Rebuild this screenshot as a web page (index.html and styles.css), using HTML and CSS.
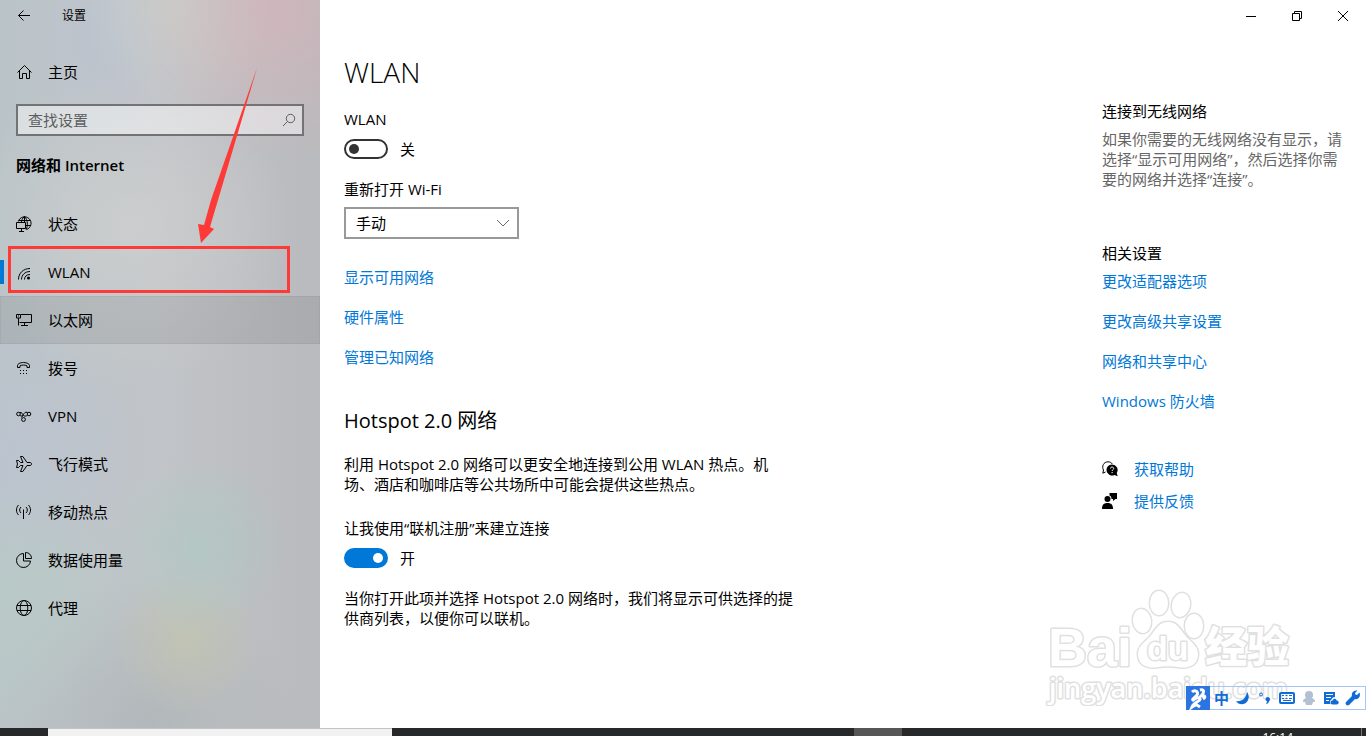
FILE: index.html
```html
<!DOCTYPE html>
<html lang="zh-CN">
  <head>
    <meta charset="UTF-8" />
    <meta name="viewport" content="width=device-width, initial-scale=1.0" />
    <title>设置</title>
    <link rel="stylesheet" href="styles.css">
  </head>
  <body>
    <div class="window">
      <aside class="sidebar">
        <header class="titlebar">
          <button class="back" aria-label="返回">
            <svg width="16" height="16" viewBox="0 0 16 16"><path d="M14 7.500H2.500M7.500 2.500l-5 5 5 5" /></svg>
          </button>
          <span>设置</span>
        </header>
        <a class="home" href="#">
          <svg width="16" height="16" viewBox="0 0 16 16"><path d="M1.500 8.500l7-7 7 7M3.500 7v7.500h3V9.500h4v5h3V7" /></svg>
          主页
        </a>
        <label class="search">
          <input type="search" placeholder="查找设置" aria-label="查找设置" />
          <svg width="14" height="14" viewBox="0 0 14 14"><circle cx="8.500" cy="5.500" r="4.200" /><path d="M5.500 8.500L1 13" /></svg>
        </label>
        <h2 class="category">网络和 Internet</h2>
        <nav class="nav">
          <a class="item" href="#">
            <svg width="16" height="16" viewBox="0 0 16 16"><path d="M2.300 5.500A6.500 6.500 0 1 1 10.500 13.500M3 4.500h11.500M9.500 9.500h5.200M8.500.500C6 2.500 5.500 4.500 5.500 6.500M8.500.500c3.500 3.500 3.500 9.500 1.500 13M8.500.500v6" /><path d="M.500 6.500h9v6h-9zM5.500 12.500v3M3 15.500h5" /></svg>
            状态
          </a>
          <a class="item active" href="#">
            <svg width="16" height="16" viewBox="0 0 16 16"><path d="M2.500 15.500C2.500 9 7.500 4.500 14 4.500M5.500 15.500c0-4.500 3.500-8 8.500-8M8.500 15.500c0-3 2.200-5 5.500-5" /><circle class="solid" cx="12.500" cy="14" r="1.500" /></svg>
            WLAN
          </a>
          <a class="item hover" href="#">
            <svg width="16" height="16" viewBox="0 0 16 16"><path d="M5 2.500h10.500v8H3.500M.500 2.500h4v3.500h-4zM2.500 6v7.500M8.500 10.500v3M5 13.500h7" /><path d="M2 4h1" /></svg>
            以太网
          </a>
          <a class="item" href="#">
            <svg width="16" height="16" viewBox="0 0 16 16"><path d="M1.500 7.500V5.500c0-1.500 2.500-3 6-3s6 1.500 6 3v2H11V5.800C9 4.800 6 4.800 4 5.800v1.700z" /><path d="M4 10.500h1M7 10.500h1M10 10.500h1M4 13.500h1M7 13.500h1M10 13.500h1" /></svg>
            拨号
          </a>
          <a class="item" href="#">
            <svg width="16" height="16" viewBox="0 0 16 16"><circle cx="2.500" cy="6" r="1.800" /><circle cx="13" cy="6" r="1.800" /><circle cx="7.500" cy="11.500" r="1.900" /><path d="M4 4.500c2-.5 2.300 1.500 3.300 2.700s2.500 1.300 4.200 0M11.500 4.500C9 3.500 8.500 5 7.500 6.500L5.500 9.500M4 7.500c1 .6 2 .6 2.800 0" /></svg>
            VPN
          </a>
          <a class="item" href="#">
            <svg width="16" height="16" viewBox="0 0 16 16"><path d="M.500 4.500h2l2 2H7L4.500.500h2.300L11 6.500h3c2 0 2 3 0 3h-3l-4.200 6H4.500L7 9.500H4.500l-2 2h-2l1-3.500z" /></svg>
            飞行模式
          </a>
          <a class="item" href="#">
            <svg width="16" height="16" viewBox="0 0 16 16"><path d="M7.500 5.500V15M5 3C3.200 4.500 3.200 7.500 5 9M10 3c1.800 1.500 1.800 4.500 0 6M2.500 1C-.2 4-.2 8 2.500 11M12.500 1c2.700 3 2.700 7 0 10" /></svg>
            移动热点
          </a>
          <a class="item" href="#">
            <svg width="16" height="16" viewBox="0 0 16 16"><path d="M7.500 1.500a7 7 0 1 0 7 7.500h-7zM9.500.500v6h6c0-3.500-2.500-6-6-6z" /></svg>
            数据使用量
          </a>
          <a class="item" href="#">
            <svg width="16" height="16" viewBox="0 0 16 16"><circle cx="8" cy="8" r="7.500" /><ellipse cx="8" cy="8" rx="3.800" ry="7.500" /><path d="M1 5.500h14M1 10.500h14" /></svg>
            代理
          </a>
        </nav>
        <div class="mark-box"></div>
        <svg class="mark-arrow" width="64" height="176" viewBox="0 0 64 176"><path d="M61 1L22 133 14 160l4 2L5 176 2 157l6 1 7-25z" /></svg>
      </aside>

      <div class="page">
        <header class="controls">
          <button aria-label="最小化"><svg width="10" height="10" viewBox="0 0 10 10"><path d="M0 5.500h10" /></svg></button>
          <button aria-label="还原"><svg width="10" height="10" viewBox="0 0 10 10"><path d="M.500 2.500h7v7h-7zM2.500 2.500v-2h7v7h-2" /></svg></button>
          <button aria-label="关闭"><svg width="10" height="10" viewBox="0 0 10 10"><path d="M0 0l10 10M10 0L0 10" /></svg></button>
        </header>
        <div class="columns">
          <main class="content">
            <h1>WLAN</h1>
            <label for="wlan">WLAN</label>
            <div class="toggle">
              <input type="checkbox" role="switch" id="wlan" />
              <span>关</span>
            </div>
            <label for="reopen">重新打开 Wi-Fi</label>
            <div class="dropdown">
              <select id="reopen">
                <option>手动</option>
              </select>
              <svg width="14" height="14" viewBox="0 0 14 14"><path d="M1 4l6 6 6-6" /></svg>
            </div>
            <div class="links">
              <a href="#">显示可用网络</a>
              <a href="#">硬件属性</a>
              <a href="#">管理已知网络</a>
            </div>
            <h2>Hotspot 2.0 网络</h2>
            <p>利用 Hotspot 2.0 网络可以更安全地连接到公用 WLAN 热点。机场、酒店和咖啡店等公共场所中可能会提供这些热点。</p>
            <label class="signup" for="signup">让我使用“联机注册”来建立连接</label>
            <div class="toggle">
              <input type="checkbox" role="switch" id="signup" checked />
              <span>开</span>
            </div>
            <p>当你打开此项并选择 Hotspot 2.0 网络时，我们将显示可供选择的提供商列表，以便你可以联机。</p>
          </main>
          <aside class="related">
            <h3>连接到无线网络</h3>
            <p>如果你需要的无线网络没有显示，请选择“显示可用网络”，然后选择你需要的网络并选择“连接”。</p>
            <h3>相关设置</h3>
            <div class="links">
              <a href="#">更改适配器选项</a>
              <a href="#">更改高级共享设置</a>
              <a href="#">网络和共享中心</a>
              <a href="#">Windows 防火墙</a>
            </div>
            <div class="support">
              <a href="#">
                <svg width="16" height="16" viewBox="0 0 16 16"><path class="line" d="M3.500 11L.800 12.200 1.500 9C-.5 5.500 1.500.800 6 .800c2.200 0 3.500 1 4.300 2.200" /><path d="M10 3.500a5.500 5.500 0 1 0 2.500 10.400l3.200 1.300-1-3.200A5.500 5.500 0 0 0 10 3.500z" /><path class="hole" d="M8.500 7.500c0-2 3.200-2 3.200 0 0 1.200-1.600 1.200-1.600 2.500M10.100 11v1.200" /></svg>
                获取帮助
              </a>
              <a href="#">
                <svg width="16" height="16" viewBox="0 0 16 16"><path d="M7.500 0H15v6h-1.500L11 8V6H9.500C9.500 4 8.500 2.800 7.500 2.500z" /><circle cx="5.500" cy="6" r="3" /><path d="M0 16c0-4 1.500-6 5.500-6s5.500 2 5.500 6z" /></svg>
                提供反馈
              </a>
            </div>
          </aside>
        </div>
      </div>

      <svg class="watermark" width="250" height="126" viewBox="0 0 250 126">
        <g class="paw">
          <ellipse cx="101" cy="41" rx="9" ry="12" transform="rotate(-8 101 41)" />
          <ellipse cx="118" cy="23" rx="9" ry="12" />
          <ellipse cx="140" cy="25" rx="9" ry="12" transform="rotate(12 140 25)" />
          <ellipse cx="153" cy="46" rx="9" ry="12" />
          <path d="M127 42c-8 0-11 5-16 12s-14 11-14 20c0 12 11 15 20 13 6-1 14-1 20 0 9 2 20-1 20-13 0-9-9-13-14-20s-8-12-16-12z" />
        </g>
        <text class="bai" x="7" y="86">Bai</text>
        <text class="du" x="106" y="80">du</text>
        <text class="jingyan" x="164" y="82">经验</text>
        <text class="domain" x="8" y="118">jingyan.baidu.com</text>
      </svg>

      <div class="ime">
        <svg class="ime-logo" width="24" height="24" viewBox="0 0 24 24"><path d="M6 6c3-3 7 0 5 3l-5 5M6 15c4-4 7-4 8-2s-6 3-8 8c4-3 5-2 8 0M14 4c4-1 5 2 1 6 4-1 5 1 2 3" /></svg>
        <div class="ime-tools">
          <span class="ime-mode">中</span>
          <svg width="16" height="16" viewBox="0 0 16 16"><path d="M12 2c3 4 2 9-2 11.500-3 1.500-7 1-9-2.500 5 1 10-2 11-9z" /></svg>
          <svg width="16" height="16" viewBox="0 0 16 16"><circle class="thin" cx="4" cy="4.500" r="1.500" /><path d="M8.500 9a2.300 2.300 0 1 1 4 1.800c-.5 1.500-1.700 3-3.500 3.500l1.200-3C9 11 8.500 10 8.500 9z" /></svg>
          <svg width="16" height="16" viewBox="0 0 16 16"><rect class="stroke" x="1" y="3" width="14" height="10" rx="1" /><path class="thin" d="M3 5.500h2M6.500 5.500h2M10 5.500h3M3 8.500h2M6.500 8.500h2M10 8.500h3M4 10.500h8" /></svg>
          <svg class="muted" width="16" height="16" viewBox="0 0 16 16"><circle cx="8" cy="5" r="4" /><path d="M2 12c0-4 3-4 6-4s6 0 6 4h-2l-1 3H5l-1-3z" /></svg>
          <svg width="16" height="16" viewBox="0 0 16 16"><path d="M1 2h11v5c-2 0-3 1-3.500 2.500C7 10 6.500 12 7.500 14H1z" /><path class="hole" d="M3 4.500h7M3 7.500h5M3 10.500h3" /><path d="M9.500 14.500a2 2 0 0 1 0-4c.8-2.500 3.500-2.500 4.200 0a2 2 0 0 1 0 4z" /></svg>
          <svg width="16" height="16" viewBox="0 0 16 16"><path d="M14.500 2.500L12 5l-1.500-.5L10 3l2.500-2.500C8.500 0 6 3 7 6L1 12c-1.500 2 1 4.500 3 3l6-6c3.500 1 6-2.500 4.500-6.500z" /></svg>
        </div>
      </div>
    </div>

    <footer class="taskbar">
      <div class="task-search"></div>
      <div class="task-active"></div>
      <time class="clock">16:14</time>
      <div class="show-desktop"></div>
    </footer>
  </body>
</html>
```
FILE: styles.css
```css
* {
  box-sizing: border-box;
}

body {
  margin: 0;
  min-height: 100vh;
  display: flex;
  flex-direction: column;
  font-family: "Open Sans", "Noto Sans CJK SC", sans-serif;
  font-size: 15px;
  line-height: 20px;
  color: #000;
  background: #fff;
}

h1,
h2,
h3,
p {
  margin: 0;
  font-weight: 400;
}

h3 {
  font-size: 15px;
}

a {
  color: #0078d7;
  text-decoration: none;
}

button {
  padding: 0;
  border: 0;
  background: none;
}

svg {
  flex: none;
  fill: none;
  stroke: #000;
}

.window {
  flex: 1;
  display: flex;
  position: relative;
}

/* sidebar */
.sidebar {
  position: relative;
  width: 320px;
  flex: none;
  background:
    radial-gradient(circle at 275px 10px, rgba(210, 180, 186, 0.8), transparent 150px),
    radial-gradient(circle at 185px 10px, rgba(204, 212, 204, 0.8), transparent 100px),
    radial-gradient(circle at 115px 35px, rgba(188, 194, 210, 0.6), transparent 100px),
    radial-gradient(circle at 130px 225px, rgba(206, 208, 207, 0.8), transparent 160px),
    radial-gradient(circle at 200px 545px, rgba(174, 201, 195, 0.7), transparent 90px),
    radial-gradient(circle at 187px 640px, rgba(194, 196, 176, 0.8), transparent 75px),
    radial-gradient(circle at 10px 450px, rgba(188, 195, 210, 0.7), transparent 140px),
    radial-gradient(circle at 0 590px, rgba(184, 203, 198, 0.8), transparent 140px),
    radial-gradient(circle at 150px 725px, rgba(174, 180, 183, 0.8), transparent 150px),
    linear-gradient(90deg, #bac4c8, #c1c4c8 50%, #b9babd);
}

.titlebar {
  display: flex;
  align-items: center;
  height: 32px;
  font-size: 12px;
}

.back {
  display: grid;
  place-items: center;
  width: 48px;
  height: 32px;
  margin-right: 14px;
}

.home,
.item {
  display: flex;
  align-items: center;
  gap: 16px;
  height: 48px;
  padding: 0 16px;
  color: #000;
}

.home {
  margin: 16px 0 8px;
}

.search {
  display: flex;
  align-items: center;
  height: 32px;
  margin: 0 16px;
  padding: 0 6px 0 10px;
  border: 2px solid #717375;
  background: rgba(255, 255, 255, 0.45);
}

.search input {
  flex: 1;
  min-width: 0;
  height: 26px;
  padding: 0;
  border: 0;
  outline: 0;
  background: none;
  font: inherit;
}

.search input::placeholder {
  color: #5c5f61;
}

.search svg {
  stroke: #5c5f61;
}

.category {
  margin: 19px 16px 25px;
  font-size: 15px;
  font-weight: 600;
}

.active {
  background: linear-gradient(#0078d7, #0078d7) left center / 4px 24px no-repeat;
}

.hover {
  background: rgba(0, 0, 0, 0.08);
  box-shadow: inset 0 0 0 1px rgba(0, 0, 0, 0.04);
}

.solid {
  fill: #000;
  stroke: none;
}

/* red marks drawn over the menu */
.mark-box {
  position: absolute;
  left: 8px;
  top: 246px;
  width: 282px;
  height: 47px;
  border: 3px solid #fd3a37;
}

.mark-arrow {
  position: absolute;
  left: 196px;
  top: 67px;
  fill: #fd3a37;
  stroke: none;
}

/* page */
.page {
  flex: 1;
  min-width: 0;
}

.controls {
  display: flex;
  justify-content: flex-end;
  height: 32px;
}

.controls button {
  display: grid;
  place-items: center;
  width: 46px;
}

.columns {
  display: flex;
  justify-content: space-between;
  padding: 0 16px 0 24px;
}

.content {
  display: flex;
  flex-direction: column;
  align-items: flex-start;
  width: 450px;
  padding-top: 22px;
}

.content h1 {
  margin-bottom: 19px;
  font-size: 28px;
  font-weight: 300;
  line-height: 36px;
}

.toggle {
  display: flex;
  align-items: center;
  gap: 12px;
  margin: 10px 0 20px;
}

.toggle input {
  appearance: none;
  display: flex;
  align-items: center;
  width: 44px;
  height: 20px;
  margin: 0;
  padding: 0 3px;
  border: 2px solid #333;
  border-radius: 10px;
}

.toggle input::before {
  content: "";
  width: 10px;
  height: 10px;
  border-radius: 50%;
  background: #333;
}

.toggle input:checked {
  justify-content: flex-end;
  border-color: #0078d7;
  background: #0078d7;
}

.toggle input:checked::before {
  background: #fff;
}

.dropdown {
  display: grid;
  align-items: center;
  width: 175px;
  margin: 8px 0 28px;
}

.dropdown select,
.dropdown svg {
  grid-area: 1 / 1;
}

.dropdown select {
  appearance: none;
  height: 32px;
  padding: 0 10px;
  border: 2px solid #999;
  border-radius: 0;
  background: #fff;
  color: #000;
  font: inherit;
}

.dropdown svg {
  justify-self: end;
  margin-right: 9px;
  stroke: #666;
  pointer-events: none;
}

.links {
  display: flex;
  flex-direction: column;
  align-items: flex-start;
  gap: 20px;
}

.content h2 {
  margin: 40px 0 19px;
  font-size: 20px;
  line-height: 28px;
}

.signup {
  margin-top: 24px;
}

/* right column */
.related {
  width: 248px;
  padding-top: 69px;
}

.related p {
  margin: 8px 0 54px;
  color: #666;
}

.related .links {
  margin-top: 8px;
}

.support {
  display: flex;
  flex-direction: column;
  gap: 12px;
  margin-top: 48px;
}

.support a {
  display: flex;
  align-items: center;
  gap: 16px;
}

.support svg {
  fill: #000;
  stroke: none;
}

.support .line {
  fill: none;
  stroke: #000;
}

.support .hole,
.ime .hole {
  fill: none;
  stroke: #fff;
}

/* watermark */
.watermark {
  position: absolute;
  right: 75px;
  bottom: 22px;
  fill: #fff;
  stroke: #e0e0e0;
  stroke-width: 3px;
  stroke-linejoin: round;
  paint-order: stroke;
  pointer-events: none;
}

.bai,
.du {
  font-family: "Liberation Sans", sans-serif;
  font-weight: 700;
}

.bai {
  font-size: 54px;
}

.du {
  font-size: 34px;
}

.jingyan {
  font-family: "Noto Sans CJK SC", sans-serif;
  font-size: 42px;
  font-weight: 900;
}

.domain {
  font-size: 27px;
  font-weight: 600;
}

/* input method bar */
.ime {
  position: absolute;
  right: 0;
  bottom: 18px;
  display: flex;
  width: 180px;
  height: 24px;
  color: #0f6cd6;
}

.ime-tools {
  flex: 1;
  display: flex;
  align-items: center;
  justify-content: space-between;
  padding: 0 4px;
  border: 1px solid #a6c5f7;
  border-left: 0;
}

.ime svg {
  fill: #0f6cd6;
  stroke: none;
}

.ime .ime-logo {
  background: #2b74e2;
  fill: none;
  stroke: #fff;
  stroke-width: 3px;
}

.ime-mode {
  font-size: 15px;
  font-weight: 700;
}

.ime .stroke,
.ime .thin {
  fill: none;
  stroke: #0f6cd6;
}

.ime .stroke {
  stroke-width: 2px;
}

.ime .muted {
  fill: #b3bfd3;
}

/* taskbar, only its top edge is on screen */
.taskbar {
  display: flex;
  height: 8px;
  padding-left: 48px;
  overflow: hidden;
  background: #262829;
}

.task-search {
  width: 344px;
  border-top: 1px solid #c4c4c4;
  background: #f2f2f2;
}

.task-active {
  width: 48px;
  margin-left: 462px;
  background: #565656;
}

.clock {
  margin-left: auto;
  color: #fff;
  font-size: 12px;
}

.show-desktop {
  width: 5px;
  margin-left: 68px;
  border-left: 1px solid #777;
}
```
